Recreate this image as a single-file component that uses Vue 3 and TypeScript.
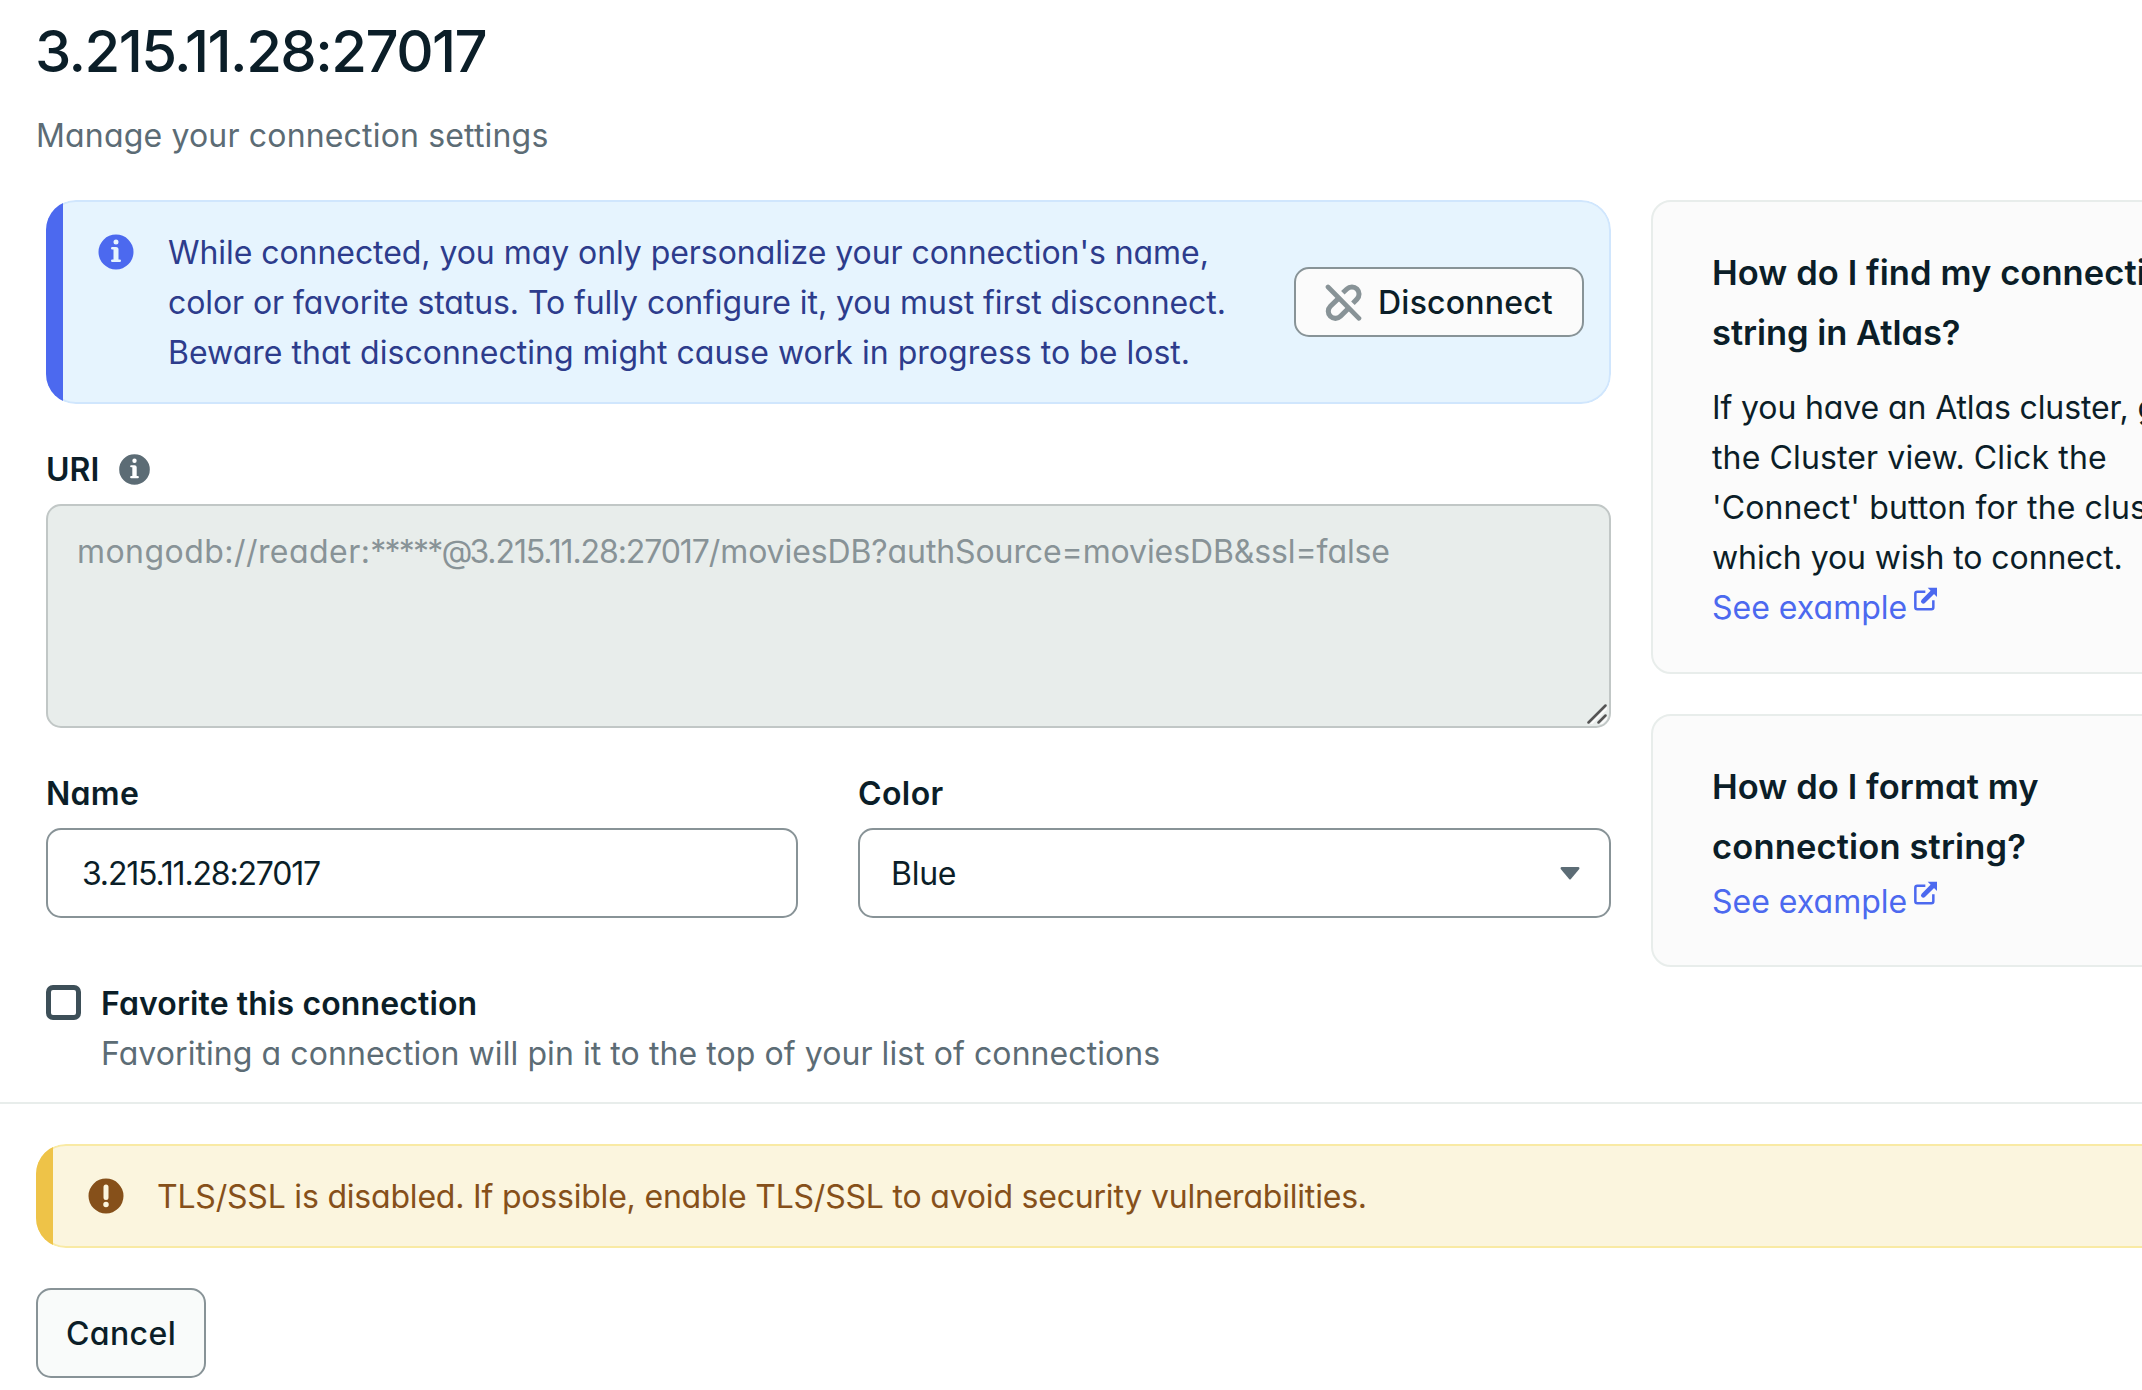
<script setup lang="ts">
import { ref } from 'vue'

const address = '3.215.11.28:27017'
const name = ref(address)
const favorite = ref(false)

const infoPath =
  'M8 15A7 7 0 1 0 8 1a7 7 0 0 0 0 14ZM9 4a1 1 0 1 1-2 0 1 1 0 0 1 2 0ZM8 6a1 1 0 0 1 1 1v4h.5a.5.5 0 0 1 0 1h-3a.5.5 0 0 1 0-1H7V7h-.5a.5.5 0 0 1 0-1H8Z'
</script>

<template>
  <div class="page">
    <header class="header">
      <h1 class="title">{{ address }}</h1>
      <p class="subtitle">Manage your connection settings</p>
    </header>

    <main class="main">
      <section class="form">
        <div class="banner info">
          <svg class="banner-icon" viewBox="0 0 16 16"><path fill="currentColor" fill-rule="evenodd" :d="infoPath" /></svg>
          <p class="banner-text">
            <span class="l1">While connected, you may only personalize your connection's name,</span><br />
            <span class="l2">color or favorite status. To fully configure it, you must first disconnect.</span><br />
            <span class="l3">Beware that disconnecting might cause work in progress to be lost.</span>
          </p>
          <button class="btn disconnect" type="button">
            <svg class="unlink" viewBox="30 22 110 110" fill="none" stroke="currentColor">
              <path stroke-width="15" d="M83 48l12-11A21 21 0 0 1 125 67l-12 12" />
              <path stroke-width="15" d="M71 64L46 88A21 21 0 0 0 76 118l24-24" />
              <path stroke-width="14" stroke-linecap="round" d="M39 31l92 93" />
            </svg>
            <span>Disconnect</span>
          </button>
        </div>

        <div class="label uri-label">
          <span class="uri-text">URI</span>
          <svg class="hint" viewBox="0 0 16 16"><path fill="currentColor" fill-rule="evenodd" :d="infoPath" /></svg>
        </div>
        <div class="uri-box">
          <span class="u1">mongodb://reader:</span><span class="u2">*****</span><span class="u3">@</span><span class="u4">{{ address }}</span><span class="u5">/moviesDB?authSource=moviesDB&amp;ssl=false</span>
          <svg class="grip" viewBox="0 0 20 20" fill="none" stroke-linecap="round">
            <path stroke="#fbfbfb" stroke-width="2" d="M4 20L20 4M14 20l6-6" />
            <path stroke="#555" stroke-width="2.5" d="M1.5 18.5L18.5 1.5M11.5 18.5l7-7" />
          </svg>
        </div>

        <div class="fields">
          <div class="field name-field">
            <div class="label name-label">Name</div>
            <div class="control name-control">{{ name }}</div>
          </div>
          <div class="field">
            <div class="label color-label">Color</div>
            <div class="control color-control">
              <span>Blue</span>
              <svg class="caret" viewBox="0 0 20 13"><path fill="#5c6c75" d="M1.5 0h17q1.5.4.8 2L10.900 12q-.9 1-1.800 0L.7 2Q0 .4 1.5 0Z" /></svg>
            </div>
          </div>
        </div>

        <div class="favorite" @click="favorite = !favorite">
          <span class="checkbox"></span>
          <div class="fav-copy">
            <div class="fav-title">Favorite this connection</div>
            <div class="fav-desc">Favoriting a connection will pin it to the top of your list of connections</div>
          </div>
        </div>
      </section>

      <aside class="help">
        <div class="card">
          <h2><span>How do I find my connection</span><br /><span class="h-atlas">string in Atlas?</span></h2>
          <p class="help-body">
            <span class="b0">If you have an Atlas cluster, go to</span><br />
            <span class="b1">the Cluster view. Click the</span><br />
            <span class="b1">'Connect' button for the cluster to</span><br />
            <span class="b4">which you wish to connect.</span>
          </p>
          <a class="link">See example<svg class="ext" viewBox="26 20 72 72" fill="none" stroke="currentColor"><path stroke-width="7.5" d="M63 34H39q-6 0-6 6v41q0 6 6 6h42q6 0 6-6V60" /><path stroke-width="14" stroke-linecap="round" d="M57 63l28-28" /><path fill="currentColor" stroke="none" d="M70 22h28v28z" /></svg></a>
        </div>
        <div class="card second">
          <h2><span>How do I format my</span><br /><span class="h-conn">connection string?</span></h2>
          <a class="link">See example<svg class="ext" viewBox="26 20 72 72" fill="none" stroke="currentColor"><path stroke-width="7.5" d="M63 34H39q-6 0-6 6v41q0 6 6 6h42q6 0 6-6V60" /><path stroke-width="14" stroke-linecap="round" d="M57 63l28-28" /><path fill="currentColor" stroke="none" d="M70 22h28v28z" /></svg></a>
        </div>
      </aside>
    </main>

    <footer class="footer">
      <div class="banner warning">
        <svg class="banner-icon" viewBox="0 0 16 16">
          <path fill="currentColor" fill-rule="evenodd" d="M8 15A7 7 0 1 0 8 1a7 7 0 0 0 0 14ZM7 4.400a1 1 0 1 1 2 0v4.200a1 1 0 0 1-2 0V4.400ZM9.100 11.400a1.100 1.100 0 1 1-2.200 0 1.100 1.100 0 0 1 2.200 0Z" />
        </svg>
        <p class="banner-text tls">TLS/SSL is disabled. If possible, enable TLS/SSL to avoid security vulnerabilities.</p>
      </div>
      <button class="btn cancel" type="button"><span>Cancel</span></button>
    </footer>
  </div>
</template>

<style>
body {
  background: #fff;
  overflow: hidden;
}
</style>

<style scoped>
.page {
  width: 2142px;
  height: 1390px;
  overflow: hidden;
  background: #fff;
  color: #0b1e28;
  font-family: Inter, 'Liberation Sans', sans-serif;
  font-feature-settings: 'cv11';
  font-size: 32px;
  line-height: 50px;
  white-space: nowrap;
}
.page * {
  box-sizing: border-box;
}
h1, h2, p {
  margin: 0;
}
svg {
  display: block;
  flex: none;
}
.header {
  height: 200px;
  padding: 15px 0 0 35px;
}
.title {
  font-size: 58px;
  line-height: 72px;
  font-weight: 500;
  letter-spacing: -1.55px;
}
.subtitle {
  margin-top: 24px;
  padding-left: 1px;
  color: #5c6c75;
  letter-spacing: 0.17px;
}
.main {
  display: flex;
  gap: 40px;
  height: 902px;
  padding-left: 46px;
}
.form {
  width: 1565px;
  flex: none;
}
.banner {
  position: relative;
  display: flex;
  border: 2px solid;
  border-radius: 30px;
  padding: 25px 25px 0 48px;
  clip-path: inset(0 round 30px);
}
.banner::before {
  content: '';
  position: absolute;
  left: -2px;
  top: -2px;
  bottom: -2px;
  width: 17px;
}
.banner-icon {
  width: 40px;
  height: 40px;
  margin-top: 5px;
}
.info {
  height: 204px;
  color: #2d3c8c;
  border-color: #d0e6fd;
  background: #e6f4fe;
}
.info::before {
  background: #4c69ef;
}
.info .banner-icon {
  color: #4c69ef;
}
.banner-text {
  margin: 1px 0 0 32px;
}
.l1 { letter-spacing: -0.06px; }
.l2 { letter-spacing: -0.08px; }
.l3 { letter-spacing: 0.02px; }
.btn {
  display: flex;
  align-items: center;
  justify-content: center;
  border: 2px solid #889397;
  border-radius: 15px;
  font: inherit;
  font-weight: 500;
  font-feature-settings: inherit;
  color: inherit;
  padding: 0;
}
.btn span {
  padding-top: 2px;
}
.disconnect {
  width: 290px;
  height: 70px;
  margin: 40px 0 0 auto;
  background: #fbfbfb;
  color: #0b1e28;
  letter-spacing: 0.2px;
  gap: 16px;
}
.unlink {
  width: 37px;
  height: 37px;
  color: #889397;
}
.label {
  height: 50px;
  padding-top: 1px;
  font-weight: 600;
}
.uri-label {
  display: flex;
  align-items: center;
  margin-top: 40px;
}
.uri-text {
  padding-top: 1px;
}
.hint {
  width: 35px;
  height: 35px;
  margin-left: 18px;
  color: #5c6c75;
}
.uri-box {
  position: relative;
  margin-top: 10px;
  height: 224px;
  border: 2px solid #c1c7c6;
  border-radius: 15px;
  background: #e8edeb;
  color: #889397;
  padding: 21px 29px;
}
.u1 { letter-spacing: 0.45px; }
.u2 { letter-spacing: -1.8px; }
.u3 { letter-spacing: -3px; }
.u4 { letter-spacing: -1.1px; }
.u5 { letter-spacing: -0.1px; }
.grip {
  position: absolute;
  right: 2px;
  bottom: 2px;
  width: 20px;
  height: 20px;
}
.fields {
  display: flex;
  gap: 60px;
  margin-top: 40px;
}
.field {
  flex: 1;
}
.name-field {
  flex: none;
  width: 752px;
}
.name-label { letter-spacing: 0.3px; }
.color-label { letter-spacing: 0.4px; }
.control {
  display: flex;
  align-items: center;
  justify-content: space-between;
  margin-top: 10px;
  height: 90px;
  border: 2px solid #889397;
  border-radius: 15px;
  background: #fff;
  padding-top: 1px;
}
.name-control {
  padding-left: 34px;
  letter-spacing: -1.18px;
}
.color-control {
  padding: 1px 29px 0 31px;
  letter-spacing: -0.25px;
}
.caret {
  width: 20px;
  height: 13px;
}
.favorite {
  display: flex;
  margin-top: 60px;
}
.checkbox {
  width: 35px;
  height: 35px;
  margin: 7px 20px 0 0;
  border: 5px solid #3d4f58;
  border-radius: 7px;
}
.fav-copy {
  padding-top: 1px;
}
.fav-title {
  font-weight: 600;
  letter-spacing: 0.12px;
}
.fav-desc {
  color: #5c6c75;
  letter-spacing: 0.07px;
}
.help {
  flex: none;
  width: 600px;
}
.card {
  height: 474px;
  padding: 41px 60px 0 59px;
  border: 2px solid #e8edeb;
  border-radius: 20px;
  background: #fbfbfb;
}
.second {
  height: 253px;
  margin-top: 40px;
}
h2 {
  font-size: 34.5px;
  line-height: 60px;
  font-weight: 600;
  letter-spacing: 0.08px;
}
.h-conn { letter-spacing: 0.15px; }
.h-atlas { letter-spacing: -0.04px; }
.help-body {
  margin-top: 20px;
}
.b0 { letter-spacing: -0.12px; }
.b1 { letter-spacing: 0.12px; }
.b4 { letter-spacing: -0.07px; }
.link {
  display: flex;
  color: #4c69ef;
}
.ext {
  width: 24px;
  height: 24px;
  margin: 4px 0 0 6px;
}
.footer {
  border-top: 2px solid #e8edeb;
  padding: 40px 0 0 36px;
}
.warning {
  width: 2200px;
  height: 104px;
  color: #86501a;
  border-color: #f9eaa4;
  background: #fbf5de;
}
.warning::before {
  background: #eec348;
}
.tls {
  margin-left: 31px;
  letter-spacing: -0.2px;
}
.cancel {
  width: 170px;
  height: 90px;
  margin-top: 40px;
  background: #f9fbfa;
  letter-spacing: 0.4px;
}
</style>
